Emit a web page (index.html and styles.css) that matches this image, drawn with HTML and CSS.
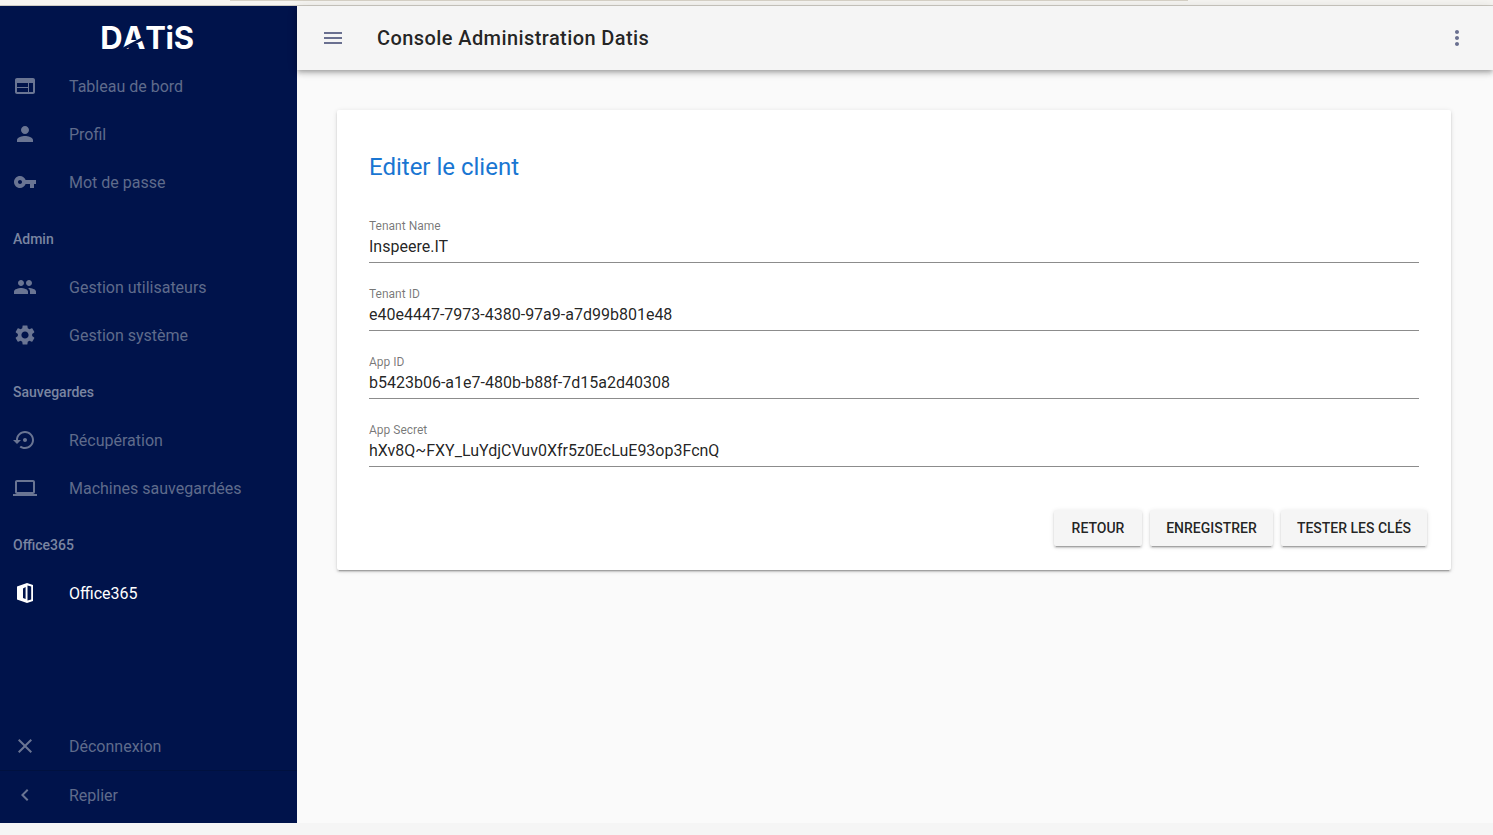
FILE: index.html
```html
<!DOCTYPE html>
<html lang="fr">

<head>
	<meta charset="UTF-8">
	<title>Console Administration Datis</title>
	<link rel="stylesheet" href="styles.css">
</head>

<body>
	<div class="browser-strip"><div class="browser-tab"></div></div>
	<div class="app">
		<nav class="sidebar">
			<div class="logo"><span class="logo-text">D<span class="logo-a">A</span>TiS</span></div>

			<a class="nav-item"><svg class="icon" viewBox="0 0 24 24"><path d="M20 4H4c-1.1 0-1.99.9-1.99 2L2 18c0 1.1.9 2 2 2h16c1.1 0 2-.9 2-2V6c0-1.1-.9-2-2-2zm-5 14H4v-4h11v4zm0-5H4V9h11v4zm5 5h-4V9h4v9z"/></svg><span>Tableau de bord</span></a>
			<a class="nav-item"><svg class="icon" viewBox="0 0 24 24"><path d="M12 12c2.21 0 4-1.79 4-4s-1.79-4-4-4-4 1.79-4 4 1.79 4 4 4zm0 2c-2.67 0-8 1.34-8 4v2h16v-2c0-2.66-5.33-4-8-4z"/></svg><span>Profil</span></a>
			<a class="nav-item"><svg class="icon" viewBox="0 0 24 24"><path d="M12.65 10C11.83 7.67 9.61 6 7 6c-3.31 0-6 2.69-6 6s2.69 6 6 6c2.61 0 4.83-1.67 5.65-4H17v4h4v-4h2v-4H12.65zM7 14c-1.1 0-2-.9-2-2s.9-2 2-2 2 .9 2 2-.9 2-2 2z"/></svg><span>Mot de passe</span></a>

			<div class="nav-title">Admin</div>
			<a class="nav-item"><svg class="icon" viewBox="0 0 24 24"><path d="M16 11c1.66 0 2.99-1.34 2.99-3S17.66 5 16 5c-1.66 0-3 1.34-3 3s1.34 3 3 3zm-8 0c1.66 0 2.99-1.34 2.99-3S9.66 5 8 5C6.34 5 5 6.34 5 8s1.34 3 3 3zm0 2c-2.33 0-7 1.17-7 3.5V19h14v-2.5c0-2.33-4.67-3.5-7-3.5zm8 0c-.29 0-.62.02-.97.05 1.16.84 1.97 1.97 1.97 3.45V19h6v-2.5c0-2.33-4.67-3.5-7-3.5z"/></svg><span>Gestion utilisateurs</span></a>
			<a class="nav-item"><svg class="icon" viewBox="0 0 24 24"><path d="M19.14 12.94c.04-.3.06-.61.06-.94 0-.32-.02-.64-.07-.94l2.03-1.58c.18-.14.23-.41.12-.61l-1.92-3.32c-.12-.22-.37-.29-.59-.22l-2.39.96c-.5-.38-1.03-.7-1.62-.94l-.36-2.54c-.04-.24-.24-.41-.48-.41h-3.84c-.24 0-.43.17-.47.41l-.36 2.54c-.59.24-1.13.57-1.62.94l-2.39-.96c-.22-.08-.47 0-.59.22L2.74 8.87c-.12.21-.08.47.12.61l2.03 1.58c-.05.3-.09.63-.09.94s.02.64.07.94l-2.03 1.58c-.18.14-.23.41-.12.61l1.92 3.32c.12.22.37.29.59.22l2.39-.96c.5.38 1.03.7 1.62.94l.36 2.54c.05.24.24.41.48.41h3.84c.24 0 .44-.17.47-.41l.36-2.54c.59-.24 1.13-.56 1.62-.94l2.39.96c.22.08.47 0 .59-.22l1.92-3.32c.12-.22.07-.47-.12-.61l-2.01-1.58zM12 15.6c-1.98 0-3.6-1.62-3.6-3.6s1.62-3.6 3.6-3.6 3.6 1.62 3.6 3.6-1.62 3.6-3.6 3.6z"/></svg><span>Gestion système</span></a>

			<div class="nav-title">Sauvegardes</div>
			<a class="nav-item"><svg class="icon" viewBox="0 0 24 24"><path d="M14 12c0-1.1-.9-2-2-2s-2 .9-2 2 .9 2 2 2 2-.9 2-2zm-2-9c-4.97 0-9 4.03-9 9H0l4 4 4-4H5c0-3.87 3.13-7 7-7s7 3.13 7 7-3.13 7-7 7c-1.51 0-2.91-.49-4.06-1.3l-1.42 1.44C8.04 20.3 9.94 21 12 21c4.97 0 9-4.03 9-9s-4.03-9-9-9z"/></svg><span>Récupération</span></a>
			<a class="nav-item"><svg class="icon" viewBox="0 0 24 24"><path d="M20 18c1.1 0 1.99-.9 1.99-2L22 6c0-1.1-.9-2-2-2H4c-1.1 0-2 .9-2 2v10c0 1.1.9 2 2 2H0v2h24v-2h-4zM4 6h16v10H4V6z"/></svg><span>Machines sauvegardées</span></a>

			<div class="nav-title">Office365</div>
			<a class="nav-item active"><svg class="icon" viewBox="0 0 24 24"><path fill-rule="evenodd" d="M14 2l6 2v16l-6 2-10-3.5v-13zM14.5 4.5v15l3.7-1V5.5zM10 7.5v9.5l2.6 1V6z"/></svg><span>Office365</span></a>

			<div class="nav-bottom">
				<a class="nav-item"><svg class="icon" viewBox="0 0 24 24"><path d="M19 6.41L17.59 5 12 10.59 6.41 5 5 6.41 10.59 12 5 17.59 6.41 19 12 13.41 17.59 19 19 17.59 13.41 12z"/></svg><span>Déconnexion</span></a>
				<a class="nav-item"><svg class="icon" viewBox="0 0 24 24"><path d="M15.41 7.41L14 6l-6 6 6 6 1.41-1.41L10.83 12z"/></svg><span>Replier</span></a>
			</div>
		</nav>

		<div class="main">
			<header class="toolbar">
				<svg class="icon toolbar-icon" viewBox="0 0 24 24"><path d="M3 18h18v-2H3v2zm0-5h18v-2H3v2zm0-7v2h18V6H3z"/></svg>
				<h1 class="toolbar-title">Console Administration Datis</h1>
				<svg class="icon toolbar-icon more" viewBox="0 0 24 24"><path d="M12 8c1.1 0 2-.9 2-2s-.9-2-2-2-2 .9-2 2 .9 2 2 2zm0 2c-1.1 0-2 .9-2 2s.9 2 2 2 2-.9 2-2-.9-2-2-2zm0 6c-1.1 0-2 .9-2 2s.9 2 2 2 2-.9 2-2-.9-2-2-2z"/></svg>
			</header>

			<section class="card">
				<h2 class="card-title">Editer le client</h2>

				<div class="field">
					<label class="field-label">Tenant Name</label>
					<div class="field-value">Inspeere.IT</div>
				</div>
				<div class="field">
					<label class="field-label">Tenant ID</label>
					<div class="field-value">e40e4447-7973-4380-97a9-a7d99b801e48</div>
				</div>
				<div class="field">
					<label class="field-label">App ID</label>
					<div class="field-value">b5423b06-a1e7-480b-b88f-7d15a2d40308</div>
				</div>
				<div class="field">
					<label class="field-label">App Secret</label>
					<div class="field-value">hXv8Q~FXY_LuYdjCVuv0Xfr5z0EcLuE93op3FcnQ</div>
				</div>

				<div class="actions">
					<button class="btn btn-back">RETOUR</button>
					<button class="btn btn-save">ENREGISTRER</button>
					<button class="btn btn-test">TESTER LES CLÉS</button>
				</div>
			</section>
		</div>
	</div>
	<div class="bottom-strip"></div>
</body>

</html>
```

FILE: styles.css
```css
* {
	margin: 0;
	padding: 0;
	box-sizing: border-box;
}

html,
body {
	height: 100%;
}

body {
	display: flex;
	flex-direction: column;
	overflow: hidden;
	background: #f5f5f5;
	font-family: Roboto, "Liberation Sans", sans-serif;
	color: rgba(0, 0, 0, .87);
}

.browser-strip {
	height: 6px;
	flex: none;
	background: #f6f5f2;
	border-bottom: 1px solid #cfccc5;
}

.browser-tab {
	width: 958px;
	height: 1px;
	margin-left: 230px;
	background: #d6d1c6;
}

.bottom-strip {
	height: 12px;
	flex: none;
	background: #f5f5f5;
}

.app {
	flex: 1;
	display: flex;
	min-height: 0;
}

.icon {
	width: 24px;
	height: 24px;
	flex: none;
	fill: currentColor;
}

/* sidebar */
.sidebar {
	width: 297px;
	flex: none;
	display: flex;
	flex-direction: column;
	padding-bottom: 4px;
	background: #00134b;
}

.logo {
	height: 56px;
	flex: none;
	display: flex;
	align-items: center;
	justify-content: center;
	padding: 8px 3px 0 0;
	color: #fff;
}

.logo-text {
	font-family: Inter, Roboto, sans-serif;
	font-size: 31px;
	font-weight: 700;
	line-height: 32px;
	letter-spacing: -.3px;
}

.logo-a {
	position: relative;
	display: inline-block;
}

.logo-a::after {
	content: "";
	position: absolute;
	left: -1px;
	right: -5px;
	top: 58%;
	height: 3px;
	background: #00134b;
	transform: rotate(-28deg);
}

.nav-item {
	height: 48px;
	flex: none;
	display: flex;
	align-items: center;
	gap: 32px;
	padding-left: 13px;
	font-size: 16px;
	color: #5f6b8b;
}

.nav-item .icon {
	color: #6a7593;
}

.nav-item.active,
.nav-item.active .icon {
	color: #fff;
}

.nav-title {
	height: 57px;
	flex: none;
	display: flex;
	align-items: center;
	padding: 9px 0 0 13px;
	font-size: 14px;
	font-weight: 500;
	color: #7a85a1;
}

.nav-bottom {
	margin-top: auto;
}

.nav-bottom .nav-item:first-child {
	height: 49px;
	border-bottom: 1px solid #00113f;
}

/* toolbar */
.main {
	flex: 1;
	min-width: 0;
	background: #fafafa;
}

.toolbar {
	height: 64px;
	display: flex;
	align-items: center;
	padding: 0 24px;
	background: #f5f5f5;
	box-shadow: 0 2px 4px -1px rgba(0, 0, 0, .2), 0 4px 5px 0 rgba(0, 0, 0, .14), 0 1px 10px 0 rgba(0, 0, 0, .12);
}

.toolbar-icon {
	color: #6a7090;
}

.toolbar-title {
	margin-left: 32px;
	font-size: 20px;
	font-weight: 500;
	letter-spacing: .41px;
}

.more {
	margin-left: auto;
}

/* card */
.card {
	margin: 40px 42px 0 40px;
	padding: 41px 32px 24px;
	background: #fff;
	border-radius: 2px;
	box-shadow: 0 3px 1px -2px rgba(0, 0, 0, .2), 0 2px 2px 0 rgba(0, 0, 0, .14), 0 1px 5px 0 rgba(0, 0, 0, .12);
}

.card-title {
	height: 32px;
	margin-bottom: 12px;
	font-size: 24px;
	font-weight: 400;
	line-height: 32px;
	color: #1976d2;
}

.field {
	height: 68px;
	display: flex;
	flex-direction: column;
	justify-content: flex-end;
	border-bottom: 1px solid #8c8c8c;
}

.field-label {
	font-size: 12px;
	line-height: 14px;
	color: rgba(0, 0, 0, .54);
}

.field-value {
	height: 29px;
	padding-top: 2px;
	font-size: 16px;
	line-height: 24px;
}

.actions {
	display: flex;
	justify-content: flex-end;
	gap: 8px;
	margin: 43px -8px 0 0;
}

.btn {
	height: 36px;
	border: 0;
	border-radius: 2px;
	background: #f5f5f5;
	font-family: inherit;
	font-size: 14px;
	font-weight: 500;
	color: rgba(0, 0, 0, .87);
	box-shadow: 0 3px 1px -2px rgba(0, 0, 0, .2), 0 2px 2px 0 rgba(0, 0, 0, .14), 0 1px 5px 0 rgba(0, 0, 0, .12);
}

.btn-back {
	width: 88px;
}

.btn-save {
	width: 123px;
}

.btn-test {
	width: 146px;
}
```
